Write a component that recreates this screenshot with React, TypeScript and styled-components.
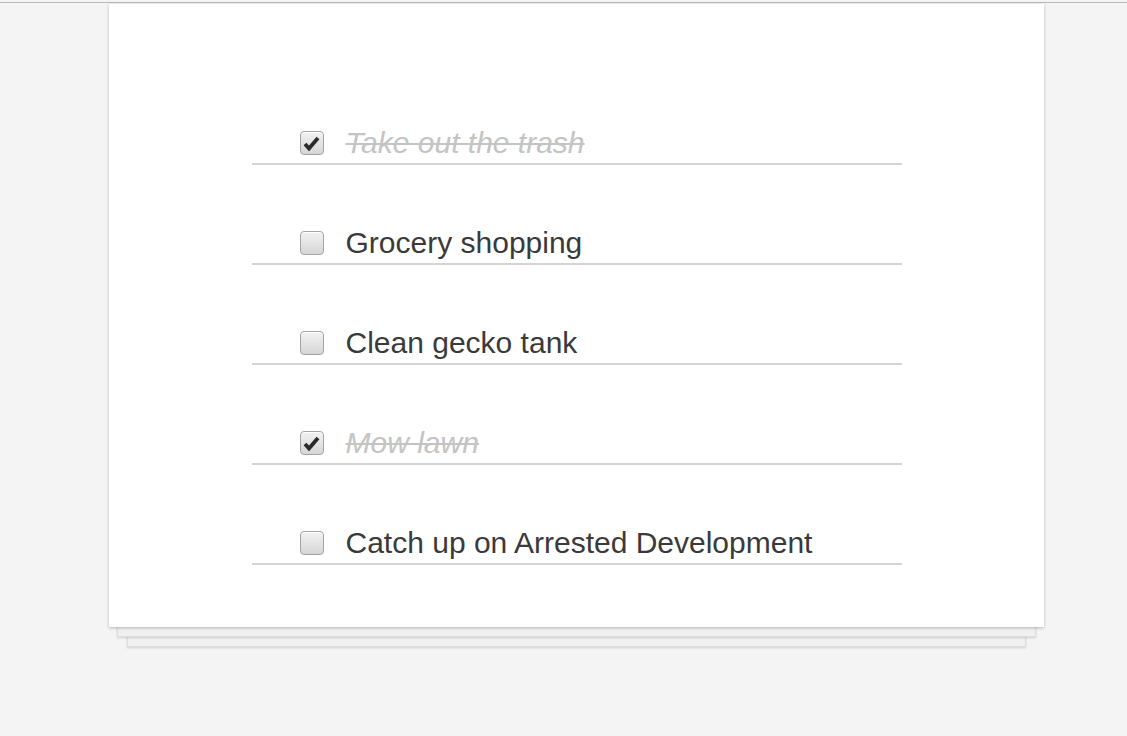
import { createGlobalStyle, styled } from "styled-components";

const GlobalStyle = createGlobalStyle`
  html, body {
    margin: 0;
    padding: 0;
    background: #f4f4f4;
    font-family: "Liberation Sans", Arial, sans-serif;
  }
`;

const Page = styled.div`
  min-height: 736px;
  border-top: 2px solid #f4f4f4;
  position: relative;

  &::before {
    content: "";
    position: absolute;
    top: 0;
    left: 0;
    right: 0;
    height: 1px;
    background: #b8b8b8;
  }
`;

const Stack = styled.div`
  position: relative;
  margin: 2px 0 0 109px;
  width: 935px;
`;

const Sheet = styled.div<{ $inset: number; $drop: number }>`
  position: absolute;
  left: ${(p) => p.$inset}px;
  right: ${(p) => p.$inset}px;
  bottom: -${(p) => p.$drop}px;
  height: 40px;
  background: #f0f0f0;
  border: 1px solid #dedede;
  box-shadow: 0 1px 2px rgba(0, 0, 0, 0.15);
`;

const Card = styled.div`
  position: relative;
  background: #fff;
  padding: 61px 0 62px;
  box-shadow: 0 1px 3px rgba(0, 0, 0, 0.25);
`;

const List = styled.ul`
  list-style: none;
  margin: 0 auto;
  padding: 0;
  width: 650px;
`;

const Row = styled.li`
  height: 100px;
  box-sizing: border-box;
  border-bottom: 2px solid #d4d4d4;
  display: flex;
  align-items: flex-end;
`;

const Label = styled.label`
  display: flex;
  align-items: center;
  height: 40px;
  padding-left: 48px;
  gap: 22px;
`;

const Box = styled.span`
  width: 22px;
  height: 22px;
  border: 1px solid #a4a4a4;
  border-radius: 4px;
  background: linear-gradient(#f2f2f2, #d6d6d6);
  box-shadow: inset 0 1px 0 #fff;
  display: flex;
  align-items: center;
  justify-content: center;
  flex: none;
`;

const Text = styled.span<{ $done: boolean }>`
  font-size: 30px;
  line-height: 40px;
  color: ${(p) => (p.$done ? "#c4c4c4" : "#3a3a3a")};
  font-style: ${(p) => (p.$done ? "italic" : "normal")};
  text-decoration: ${(p) => (p.$done ? "line-through" : "none")};
  text-decoration-thickness: 2px;
`;

const todos = [
  { text: "Take out the trash", done: true },
  { text: "Grocery shopping", done: false },
  { text: "Clean gecko tank", done: false },
  { text: "Mow lawn", done: true },
  { text: "Catch up on Arrested Development", done: false },
];

function Check() {
  return (
    <svg width="17" height="15" viewBox="0 0 17 15">
      <path d="M2 8 L6 12.5 L15 2" fill="none" stroke="#2a2a2a" strokeWidth="3.8" strokeLinejoin="miter" />
    </svg>
  );
}

export default function App() {
  return (
    <>
      <GlobalStyle />
      <Page>
        <Stack>
          <Sheet $inset={18} $drop={20} />
          <Sheet $inset={8} $drop={10} />
          <Card>
            <List>
              {todos.map((t) => (
                <Row key={t.text}>
                  <Label>
                    <Box>{t.done && <Check />}</Box>
                    <Text $done={t.done}>{t.text}</Text>
                  </Label>
                </Row>
              ))}
            </List>
          </Card>
        </Stack>
      </Page>
    </>
  );
}
